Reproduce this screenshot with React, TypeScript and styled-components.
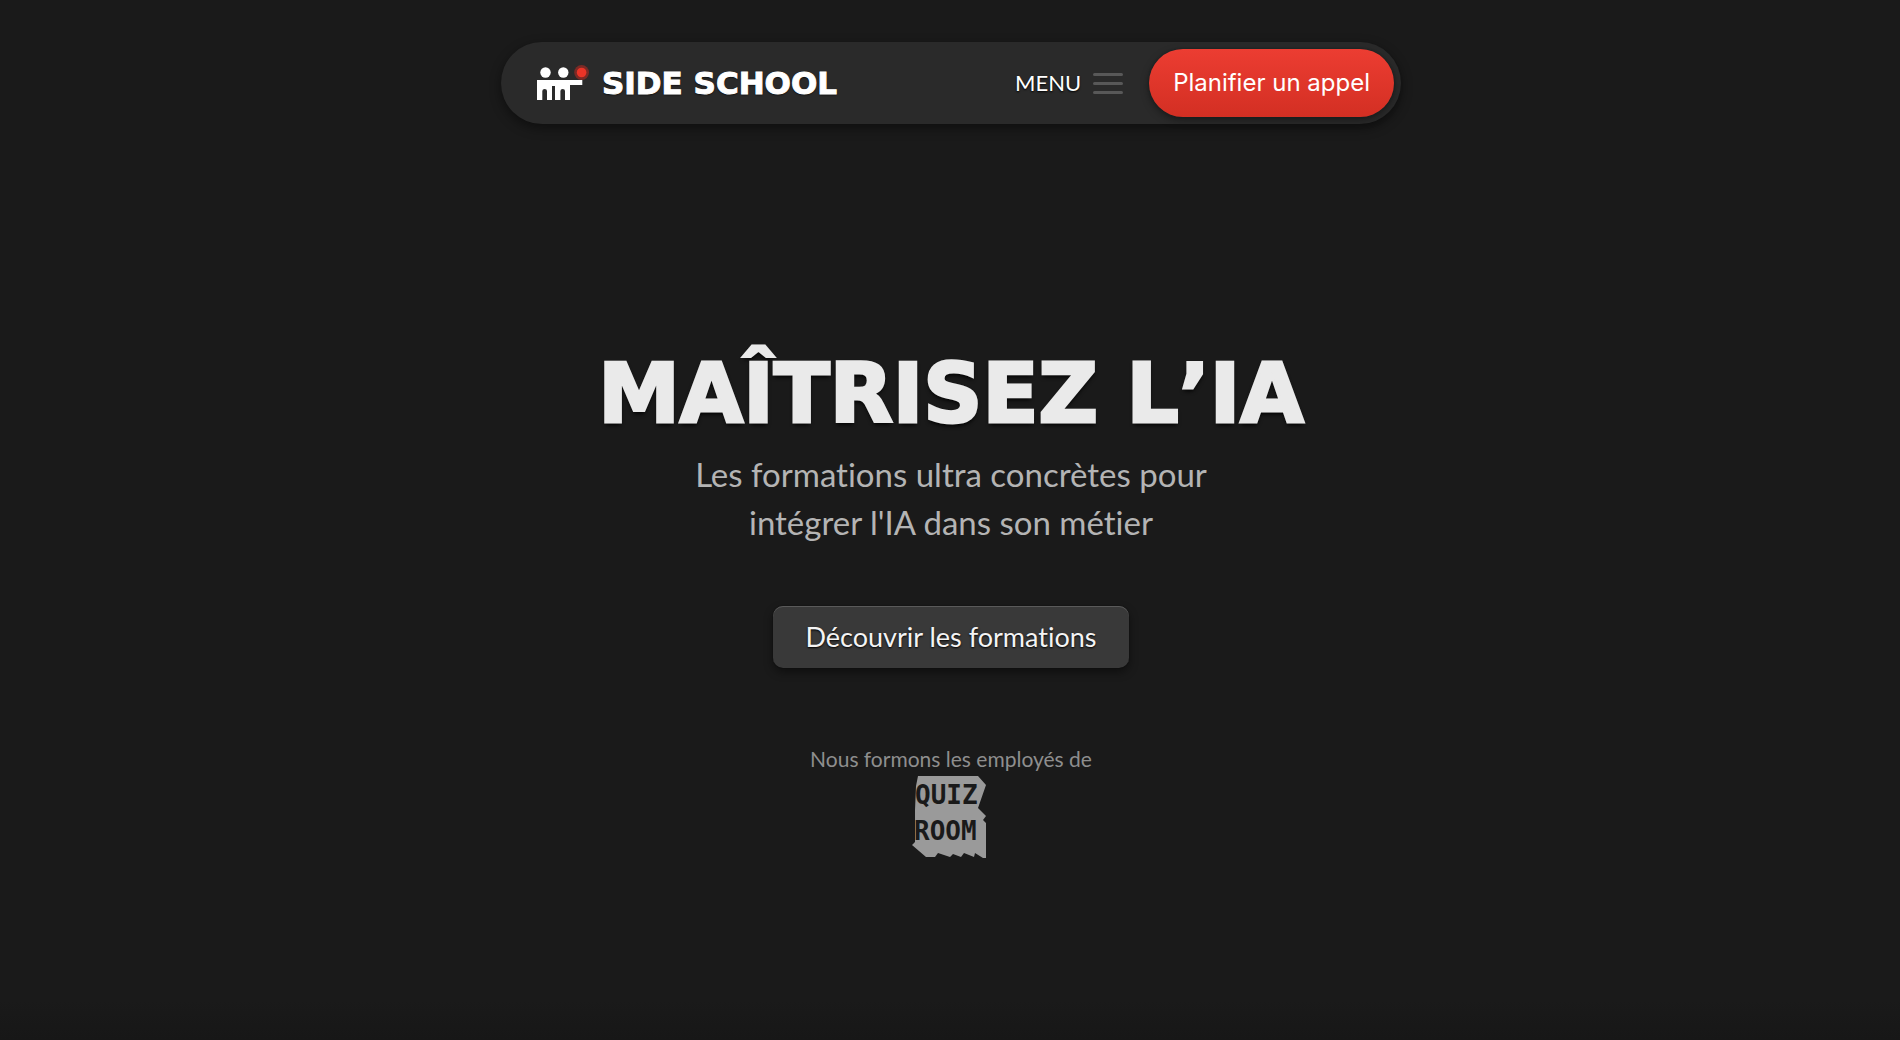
import React from 'react';
import styled, { createGlobalStyle } from 'styled-components';

const GlobalStyle = createGlobalStyle`
  *, *::before, *::after { box-sizing: border-box; }
  body {
    margin: 0;
    background: #1a1a1a;
    color: #fff;
    font-family: Lato, 'Open Sans', sans-serif;
    font-variant-ligatures: none;
  }
`;

const Page = styled.div`
  min-height: 100vh;
  display: flex;
  flex-direction: column;
  align-items: center;
  padding: 42px 24px 42px 26px;
  background: linear-gradient(transparent calc(100% - 40px), #171717);
`;

const NavBar = styled.header`
  width: 100%;
  max-width: 900px;
  display: flex;
  align-items: center;
  padding: 7px 7px 7px 36px;
  border-radius: 42px;
  background: #2a2a2a;
  box-shadow: 0 4px 12px rgba(0, 0, 0, 0.45);
`;

const Brand = styled.a`
  display: flex;
  align-items: center;
  gap: 12px;
  margin-right: auto;
  color: #fff;
  text-decoration: none;
  font: 700 31px/36px 'DejaVu Sans', sans-serif;
  font-kerning: none;
  text-shadow: 0 1px 2px #000;
  -webkit-text-stroke: 1px #fff;
  white-space: nowrap;
`;

const MenuButton = styled.button`
  display: flex;
  align-items: center;
  gap: 12px;
  margin-right: 26px;
  padding: 0;
  border: 0;
  background: none;
  color: #fff;
  font: 400 22px/28px Lato, sans-serif;
  text-shadow: 0 1px 2px #000;
  cursor: pointer;
`;

const Bars = styled.span`
  display: grid;
  gap: 6px;
  width: 30px;

  i {
    height: 3px;
    border-radius: 2px;
    background: #585858;
  }
`;

const CallButton = styled.button`
  padding: 20px 24px;
  border: 0;
  border-radius: 34px;
  background: linear-gradient(#ec3d32, #d32f23);
  box-shadow: 0 0 2px #102020, 0 3px 8px rgba(0, 0, 0, 0.4);
  color: #fff;
  font: 400 24px/28px Inter, sans-serif;
  cursor: pointer;
`;

const Hero = styled.main`
  display: flex;
  flex-direction: column;
  align-items: center;
  padding-top: 224px;
  text-align: center;
`;

const Title = styled.h1`
  margin: 0;
  color: #eaeaea;
  font: 700 82px/92px 'DejaVu Sans', sans-serif;
  font-kerning: none;
  text-shadow: 0 3px 4px #000;
  -webkit-text-stroke: 3px #eaeaea;
`;

const Lead = styled.p`
  max-width: 540px;
  margin: 10px 0 0;
  color: #b4b4b4;
  font-size: 33px;
  line-height: 48px;
`;

const DiscoverButton = styled.button`
  margin-top: 60px;
  padding: 14px 32px;
  border: 0;
  border-radius: 10px;
  background: #393939;
  box-shadow: inset 0 1px 0 #5a5a5a, 0 0 1px #000, 0 4px 10px rgba(0, 0, 0, 0.45);
  color: #f4f4f4;
  font: 400 27px/34px Lato, sans-serif;
  font-variant-ligatures: none;
  text-shadow: 0 1px 2px #000;
  cursor: pointer;
`;

const Clients = styled.section`
  display: flex;
  flex-direction: column;
  align-items: center;
  margin-top: 74px;
`;

const ClientsLabel = styled.h2`
  margin: 0;
  color: #8e8e8e;
  font-size: 21px;
  font-weight: 400;
  line-height: 34px;
`;

const LogoText = styled.text`
  fill: #1a1a1a;
  font: 700 26px 'DejaVu Sans Mono', monospace;
`;

function SchoolMark() {
  return (
    <svg width="53" height="38" viewBox="0 0 53 38" aria-hidden="true">
      <g fill="#fff">
        <circle cx="8.5" cy="8.5" r="5.2" />
        <circle cx="26.3" cy="8.5" r="5.2" />
        <path d="M0 16H45.3V21H33V36H28V27q0-2-2.3-2t-2.3 2V36H18V22h-3V36H10V27q0-2-2.3-2T5.3 27V36H0Z" />
      </g>
      <circle cx="44.6" cy="8.5" r="7.4" fill="#7c2a25" />
      <circle cx="44.6" cy="8.5" r="4.8" fill="#ea3427" />
    </svg>
  );
}

function QuizRoomLogo() {
  return (
    <svg width="78" height="82" viewBox="0 0 78 82" role="img" aria-label="Quiz Room">
      <path
        fill="#9a9a9a"
        d="M6 0H66L74 9 66 32 74 40 71 44 74 47V82H71L63 77 62 81 52 77 49 81 41 78 38 81 26 77 23 81H14L0 69 3 66V34L4 10Z"
      />
      <LogoText x="3" y="28">QUIZ</LogoText>
      <LogoText x="2" y="64">ROOM</LogoText>
    </svg>
  );
}

export default function App() {
  return (
    <>
      <GlobalStyle />
      <Page>
        <NavBar>
          <Brand href="#">
            <SchoolMark />
            SIDE SCHOOL
          </Brand>
          <MenuButton type="button">
            MENU
            <Bars aria-hidden="true">
              <i />
              <i />
              <i />
            </Bars>
          </MenuButton>
          <CallButton type="button">Planifier un appel</CallButton>
        </NavBar>
        <Hero>
          <Title>MAÎTRISEZ L’IA</Title>
          <Lead>
            Les formations ultra concrètes pour
            <br />
            intégrer l'IA dans son métier
          </Lead>
          <DiscoverButton type="button">Découvrir les formations</DiscoverButton>
          <Clients>
            <ClientsLabel>Nous formons les employés de</ClientsLabel>
            <QuizRoomLogo />
          </Clients>
        </Hero>
      </Page>
    </>
  );
}
